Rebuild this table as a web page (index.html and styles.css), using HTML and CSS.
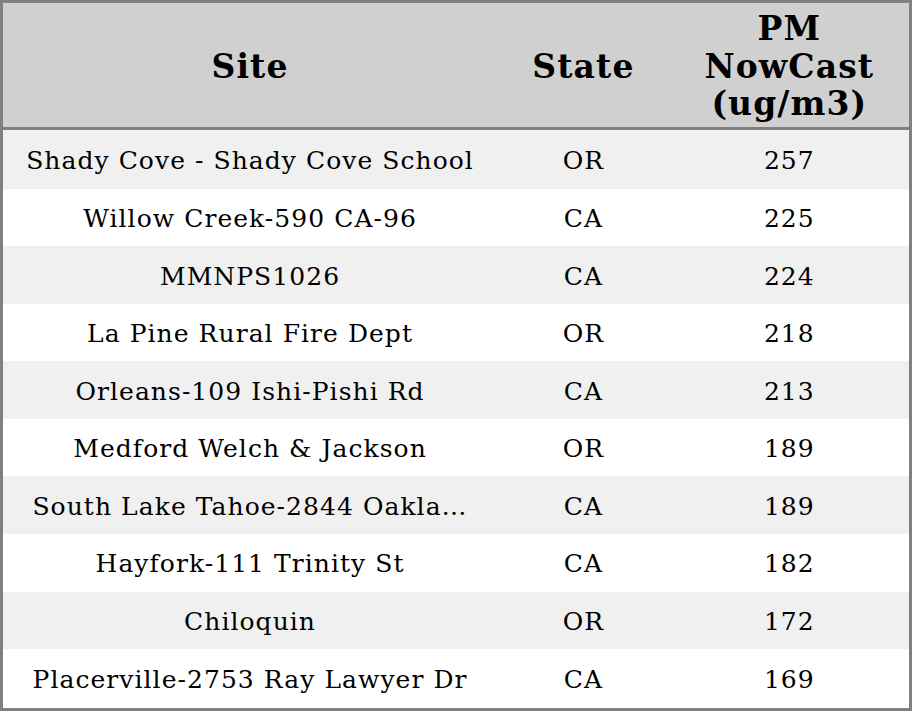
FILE: index.html
```html
<!DOCTYPE html>
<html>
<head>
<meta charset="utf-8">
<link rel="stylesheet" href="styles.css">
</head>
<body>
<table class="aq">
  <colgroup>
    <col class="c-site">
    <col class="c-state">
    <col class="c-pm">
  </colgroup>
  <thead>
    <tr><th>Site</th><th>State</th><th>PM<br>NowCast<br>(ug/m3)</th></tr>
  </thead>
  <tbody>
    <tr><td>Shady Cove - Shady Cove School</td><td>OR</td><td>257</td></tr>
    <tr><td>Willow Creek-590 CA-96</td><td>CA</td><td>225</td></tr>
    <tr><td>MMNPS1026</td><td>CA</td><td>224</td></tr>
    <tr><td>La Pine Rural Fire Dept</td><td>OR</td><td>218</td></tr>
    <tr><td>Orleans-109 Ishi-Pishi Rd</td><td>CA</td><td>213</td></tr>
    <tr><td>Medford Welch &amp; Jackson</td><td>OR</td><td>189</td></tr>
    <tr><td>South Lake Tahoe-2844 Oakla…</td><td>CA</td><td>189</td></tr>
    <tr><td>Hayfork-111 Trinity St</td><td>CA</td><td>182</td></tr>
    <tr><td>Chiloquin</td><td>OR</td><td>172</td></tr>
    <tr><td>Placerville-2753 Ray Lawyer Dr</td><td>CA</td><td>169</td></tr>
  </tbody>
</table>
</body>
</html>
```

FILE: styles.css
```css
html, body {
  margin: 0;
  padding: 0;
  background: #ffffff;
}
.aq {
  width: 912px;
  height: 711px;
  border-collapse: collapse;
  border: 3px solid #808080;
  font-family: "DejaVu Serif", serif;
  color: #000;
  table-layout: fixed;
}
.c-site { width: 494px; }
.c-state { width: 172px; }
.c-pm { width: 240px; }
.aq th {
  background: #d0d0d0;
  font-weight: bold;
  font-size: 33px;
  letter-spacing: 1.1px;
  line-height: 37.5px;
  height: 121px;
  padding: 3px 0 0 0;
  text-align: center;
  vertical-align: middle;
  border-bottom: 3px solid #808080;
}
.aq td {
  font-size: 25px;
  letter-spacing: 1.05px;
  text-align: center;
  vertical-align: middle;
  padding: 2px 0 0 0;
  white-space: nowrap;
  overflow: hidden;
}
.aq tbody tr:nth-child(odd) td { background: #f0f0f0; }
.aq tbody tr:nth-child(even) td { background: #ffffff; }
```
